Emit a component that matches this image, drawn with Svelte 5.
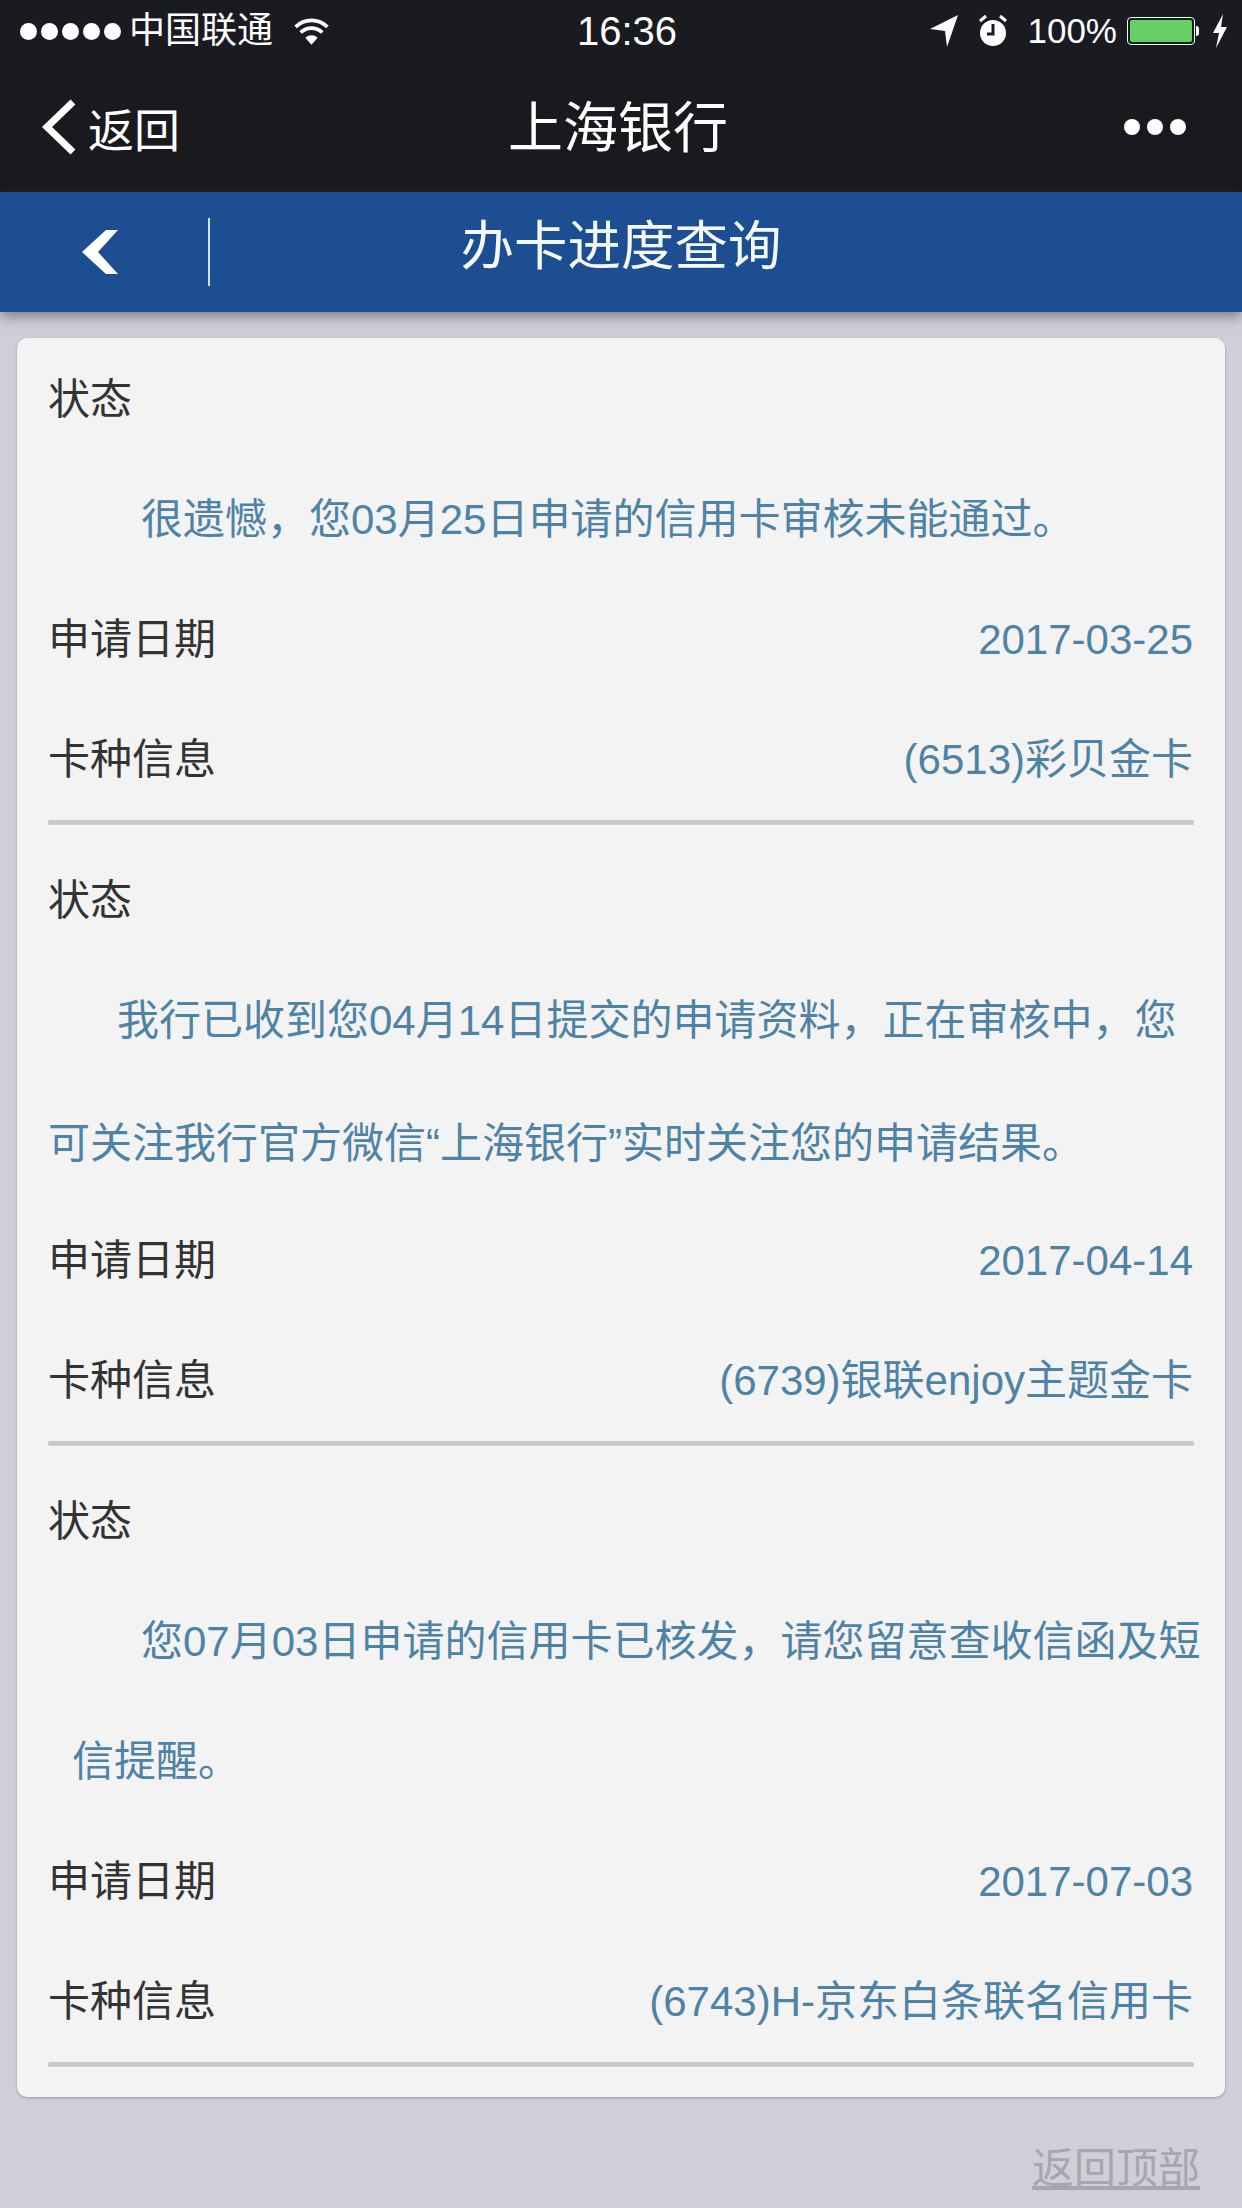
<script>
  const records = [
    { lines: ['很遗憾，您03月25日申请的信用卡审核未能通过。'], kind: 'rejected', date: '2017-03-25', card: '(6513)彩贝金卡' },
    { lines: ['我行已收到您04月14日提交的申请资料，正在审核中，您', '可关注我行官方微信“上海银行”实时关注您的申请结果。'], kind: 'reviewing', date: '2017-04-14', card: '(6739)银联enjoy主题金卡' },
    { lines: ['您07月03日申请的信用卡已核发，请您留意查收信函及短', '信提醒。'], kind: 'issued', date: '2017-07-03', card: '(6743)H-京东白条联名信用卡' }
  ];
</script>

<div class="page">
  <header class="top">
    <div class="status">
      <div class="status-left">
        <span class="signal"><i></i><i></i><i></i><i></i><i></i></span>
        <span class="carrier">中国联通</span>
        <svg class="wifi" viewBox="0 0 36 28" width="37" height="29">
          <path d="M18 27 L12 20 A9 9 0 0 1 24 20 Z" fill="#fff" />
          <path d="M7.5 15 A15 15 0 0 1 28.5 15" fill="none" stroke="#fff" stroke-width="3.6" />
          <path d="M2.5 9.5 A22 22 0 0 1 33.5 9.5" fill="none" stroke="#fff" stroke-width="3.6" />
        </svg>
      </div>
      <div class="time">16:36</div>
      <div class="status-right">
        <svg class="arrow" viewBox="0 0 28 34" width="28" height="34"><path d="M0 15 L28 1 L17 33 L15 17 Z" fill="#fff" /></svg>
        <svg class="alarm" viewBox="0 0 30 34" width="30" height="34">
          <circle cx="15" cy="19" r="13" fill="#fff" />
          <path d="M2 7 L8 2 M28 7 L22 2" stroke="#fff" stroke-width="3" />
          <path d="M15 10 V20 H9" fill="none" stroke="#1a1a20" stroke-width="3" />
        </svg>
        <span class="percent">100%</span>
        <span class="battery"><b></b></span>
        <span class="nub"></span>
        <svg class="bolt" viewBox="0 0 16 34" width="16" height="34"><path d="M11 0 L1 19 H7 L4 34 L15 13 H9 Z" fill="#fff" /></svg>
      </div>
    </div>
    <div class="nav">
      <div class="back">
        <svg viewBox="0 0 38 58" width="38" height="58"><path d="M33 4 L7 29 L33 54" fill="none" stroke="#fff" stroke-width="7" /></svg>
        <span>返回</span>
      </div>
      <div class="nav-title">上海银行</div>
      <div class="more"><i></i><i></i><i></i></div>
    </div>
  </header>

  <div class="bar">
    <div class="bar-left">
      <svg viewBox="0 0 38 44" width="38" height="44"><path d="M36 0 H24 L0 22 L24 44 H36 L16 22 Z" fill="#fff" /></svg>
      <span class="bar-sep"></span>
    </div>
    <div class="bar-title">办卡进度查询</div>
    <div></div>
  </div>

  <main class="card">
    {#each records as r}
      <section class="record">
        <div class="row"><span>状态</span></div>
        <p class="message {r.kind}">
          {#each r.lines as line}
            <span>{line}</span>
          {/each}
        </p>
        <div class="row"><span>申请日期</span><span class="value">{r.date}</span></div>
        <div class="row"><span>卡种信息</span><span class="value">{r.card}</span></div>
        <div class="rule"></div>
      </section>
    {/each}
  </main>

  <footer class="foot"><span>返回顶部</span></footer>
</div>

<style>
  :global(body) {
    margin: 0;
    background: #cfcfd9;
  }
  .page {
    width: 1242px;
    height: 2208px;
    overflow: hidden;
    background: #cfcfd9;
    font-family: "Liberation Sans", "Noto Sans CJK SC", sans-serif;
    color: #333;
  }
  .top {
    height: 192px;
    background: #1a1a1e;
    color: #fff;
  }
  .status {
    height: 62px;
    padding: 0 14px 0 20px;
    background: #1a1a21;
    display: grid;
    grid-template-columns: 1fr auto 1fr;
    align-items: center;
  }
  .status-left {
    display: flex;
    align-items: center;
  }
  .signal {
    display: flex;
    gap: 4px;
  }
  .signal i {
    width: 17px;
    height: 17px;
    border-radius: 50%;
    background: #fff;
  }
  .carrier {
    margin-left: 8px;
    font-size: 36px;
    line-height: 44px;
  }
  .wifi {
    margin-left: 20px;
  }
  .time {
    font-size: 40px;
    line-height: 44px;
    margin-left: 6px;
  }
  .status-right {
    display: flex;
    align-items: center;
    justify-content: flex-end;
  }
  .alarm {
    margin-left: 20px;
  }
  .percent {
    margin-left: 19px;
    font-size: 35px;
    line-height: 44px;
  }
  .battery {
    margin-left: 10px;
    width: 68px;
    height: 28px;
    padding: 2px;
    box-sizing: border-box;
    border: 1px solid #dfe;
    border-radius: 4px;
    display: block;
  }
  .battery b {
    display: block;
    height: 100%;
    background: #66cf65;
    border-radius: 2px;
  }
  .nub {
    width: 3px;
    height: 10px;
    margin-left: 1px;
    background: #fff;
    border-radius: 0 3px 3px 0;
  }
  .bolt {
    margin-left: 13px;
  }
  .nav {
    height: 130px;
    padding: 0 46px 0 40px;
    display: grid;
    grid-template-columns: 1fr auto 1fr;
    align-items: center;
  }
  .back {
    display: flex;
    align-items: center;
    font-size: 46px;
    gap: 10px;
  }
  .nav-title {
    font-size: 55px;
    line-height: 70px;
    padding-top: 2px;
  }
  .more {
    display: flex;
    justify-content: flex-end;
    gap: 7px;
    padding-right: 10px;
  }
  .more i {
    width: 16px;
    height: 16px;
    border-radius: 50%;
    background: #fff;
  }
  .bar {
    height: 120px;
    background: #1d4e91;
    box-shadow: 0 5px 12px rgba(60, 65, 60, 0.55);
    display: grid;
    grid-template-columns: 1fr auto 1fr;
    align-items: center;
    position: relative;
    color: #fff;
  }
  .bar-left {
    display: flex;
    align-items: center;
    padding-left: 82px;
  }
  .bar-sep {
    width: 2px;
    height: 68px;
    margin-left: 88px;
    background: #cfe2f5;
  }
  .bar-title {
    font-size: 53.5px;
    line-height: 70px;
    padding-bottom: 10px;
    color: #f4f9fd;
  }
  .card {
    margin: 26px 17px 0;
    padding: 2px 31px 29px;
    background: #f3f3f4;
    border-radius: 10px;
    box-shadow: 0 1px 3px rgba(120, 120, 130, 0.6);
  }
  .row {
    display: flex;
    justify-content: space-between;
    font-size: 42px;
    line-height: 120px;
    color: #333;
    padding: 0 1px 0 0;
  }
  .value {
    color: #4f83a5;
  }
  .message {
    margin: 0;
    font-size: 42px;
    line-height: 120px;
    color: #4f83a5;
    white-space: nowrap;
  }
  .message span {
    display: block;
  }
  .rejected span {
    padding-left: 93px;
  }
  .reviewing span:first-child {
    padding-left: 69px;
  }
  .reviewing span:last-child {
    line-height: 126px;
    margin-bottom: -6px;
  }
  .issued span:first-child {
    padding-left: 93px;
  }
  .issued span:last-child {
    padding-left: 24px;
  }
  .rule {
    height: 5px;
    margin-bottom: 15px;
    background: #c9c9c9;
    border-bottom: 1px solid #fafafa;
    border-radius: 2px;
  }
  .record:last-child .rule {
    margin-bottom: 0;
  }
  .foot {
    display: flex;
    justify-content: flex-end;
    padding: 47px 42px 0 0;
    font-size: 42px;
    line-height: 50px;
    color: #a6a6ac;
  }
  .foot span {
    text-decoration: underline;
  }
</style>
